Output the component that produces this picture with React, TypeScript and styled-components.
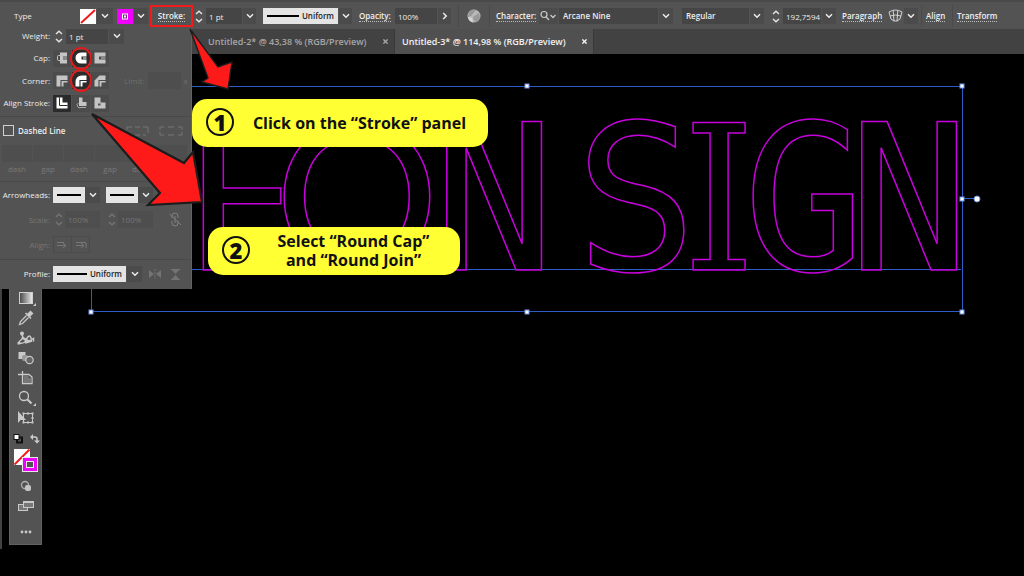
import React from "react";
import styled, { createGlobalStyle, css } from "styled-components";

const Global = createGlobalStyle`
  *, *::before, *::after { box-sizing: border-box; }
  html, body { margin: 0; background: #000; }
  body { font-family: "Open Sans", "Noto Sans", sans-serif; font-size: 8px; font-weight: 500; line-height: 12px; color: #ececec; overflow: hidden; }
  button, input, select { font: inherit; color: inherit; margin: 0; padding: 0; border: 0; background: none; border-radius: 0; appearance: none; outline: none; }
  svg { display: block; }
`;

const Shell = styled.div`
  position: relative;
  display: flex;
  flex-direction: column;
  min-height: 100vh;
  overflow: hidden;
`;

/* ---------- shared controls ---------- */
const Field = styled.input<{ $w: number }>`
  width: ${(p) => p.$w}px;
  height: 16px;
  padding-left: 3px !important;
  background: #454545 !important;
`;
const Choice = styled.select<{ $w: number }>`
  width: ${(p) => p.$w}px;
  height: 16px;
  padding-left: 4px !important;
  background: #454545 !important;
  font-weight: 600 !important;
`;
const DropButton = styled.button<{ $w?: number }>`
  display: grid;
  place-items: center;
  width: ${(p) => p.$w ?? 13}px;
  height: 16px;
  background: #4b4b4b;
`;
const StepperBox = styled.button<{ $dim?: boolean }>`
  display: grid;
  place-items: center;
  width: 12px;
  height: 16px;
  color: ${(p) => (p.$dim ? "#747474" : "#e6e6e6")};
`;
const Sample = styled.button<{ $w: number }>`
  display: flex;
  align-items: center;
  gap: 3px;
  width: ${(p) => p.$w}px;
  height: 16px;
  padding: 0 4px;
  background: #e4e4e4;
  color: #222;
  font-weight: 600;
`;
const Rule = styled.span`
  flex: 1;
  height: 2px;
  background: #000;
`;

const Chevron = () => (
  <svg width="8" height="6" viewBox="0 0 8 6" fill="none" stroke="currentColor" strokeWidth="1.5">
    <path d="M1 1.2 4 4.2 7 1.2" />
  </svg>
);
const ChevronRight = () => (
  <svg width="6" height="8" viewBox="0 0 6 8" fill="none" stroke="currentColor" strokeWidth="1.5">
    <path d="M1.2 1 4.2 4 1.2 7" />
  </svg>
);
const Stepper = ({ label, dim }: { label: string; dim?: boolean }) => (
  <StepperBox aria-label={label} $dim={dim}>
    <svg width="8" height="13" viewBox="0 0 8 13" fill="none" stroke="currentColor" strokeWidth="1.4">
      <path d="M1 4 4 1.2 7 4M1 9 4 11.8 7 9" />
    </svg>
  </StepperBox>
);

/* ---------- control bar ---------- */
const ControlBar = styled.header`
  position: relative;
  z-index: 3;
  display: flex;
  align-items: center;
  height: 29px;
  padding: 1px 0 0 14px;
  background: #535353;
  border-top: 2px solid #4a4a4a;
`;
const BarGroup = styled.div<{ $w: number }>`
  display: flex;
  flex: none;
  align-items: center;
  gap: 1px;
  width: ${(p) => p.$w}px;
`;
const BarLink = styled.a`
  color: #f0f0f0;
  font-weight: 600;
  line-height: 10px;
  text-decoration: none;
  border-bottom: 1px dotted #bbb;
`;
const StrokeHighlight = styled.div`
  display: grid;
  place-items: center;
  flex: none;
  width: 43px;
  height: 22px;
  border: 2px solid #f01c1c;
`;
const Divider = styled.i<{ $after?: number }>`
  flex: none;
  width: 1px;
  height: 22px;
  margin-right: ${(p) => p.$after ?? 0}px;
  background: #4a4a4a;
`;
const FillSwatch = () => (
  <svg width="16" height="15" viewBox="0 0 16 15">
    <rect width="16" height="15" fill="#fff" />
    <path d="M1 14 15 1" stroke="#f01c1c" strokeWidth="2" />
  </svg>
);
const StrokeSwatch = () => (
  <svg width="16" height="15" viewBox="0 0 16 15">
    <rect width="16" height="15" fill="#f000ff" />
    <rect x="5.5" y="5" width="5" height="5" fill="#8a1b92" stroke="#fff" />
    <rect x="7" y="6.5" width="2" height="2" fill="#fff" />
  </svg>
);

/* ---------- document tabs ---------- */
const Tabs = styled.nav`
  display: flex;
  height: 25px;
  padding-left: 192px;
  background: #424242;
`;
const Tab = styled.div<{ $active?: boolean }>`
  display: flex;
  align-items: center;
  justify-content: space-between;
  width: ${(p) => (p.$active ? 199 : 203)}px;
  padding: 0 4px 0 ${(p) => (p.$active ? 7 : 16)}px;
  border-right: 1px solid #393939;
  background: ${(p) => (p.$active ? "#505050" : "#424242")};
  color: ${(p) => (p.$active ? "#f2f2f2" : "#a6a6a6")};
  font-size: 9px;
  font-weight: 600;
`;
const CloseButton = styled.button`
  display: grid;
  place-items: center;
  width: 10px;
  height: 12px;
`;
const Close = ({ label }: { label: string }) => (
  <CloseButton aria-label={label}>
    <svg width="5" height="5" viewBox="0 0 5 5" stroke="currentColor" strokeWidth="1.4">
      <path d="M.4.4 4.6 4.6M4.6.4.4 4.6" />
    </svg>
  </CloseButton>
);

/* ---------- stroke panel ---------- */
const Panel = styled.section`
  position: absolute;
  z-index: 2;
  top: 24px;
  left: 0;
  width: 192px;
  background: #535353;
  border-right: 1px solid #626262;
`;
const Section = styled.div`
  padding: 1px 0 2px;
  & + & { border-top: 1px solid #494949; }
`;
const Row = styled.div<{ $h?: number; $dim?: boolean }>`
  display: flex;
  align-items: center;
  gap: 1px;
  height: ${(p) => p.$h ?? 22}px;
  ${(p) => p.$dim && css`color: #767676;`}
`;
const RowLabel = styled.label`
  flex: none;
  width: 50px;
  margin-right: 2px;
  text-align: right;
  white-space: nowrap;
`;
const Pair = styled.div`
  display: flex;
  align-items: center;
  width: 52px;
`;
const IconToggle = styled.button<{ $on?: boolean; $ring?: boolean }>`
  position: relative;
  display: grid;
  place-items: center;
  width: 18px;
  height: 17px;
  color: ${(p) => (p.$on ? "#fff" : "#c4c4c4")};
  background: ${(p) => (p.$on ? "#2b2b2b" : "#4c4c4c")};
  ${(p) =>
    p.$ring &&
    css`
      &::after {
        content: "";
        position: absolute;
        inset: -3px -2px;
        border: 2px solid #e01c1c;
        border-radius: 50%;
      }
    `}
`;
const LimitGroup = styled.div`
  display: flex;
  align-items: center;
  gap: 3px;
  margin-left: 14px;
  color: #6e6e6e;
`;
const DimField = styled.input<{ $w: number }>`
  width: ${(p) => p.$w}px;
  height: 17px;
  padding-left: 3px !important;
  color: #767676 !important;
  background: #4e4e4e !important;
`;
const CheckLabel = styled.label`
  display: flex;
  align-items: center;
  gap: 4px;
  width: 120px;
  padding-left: 3px;
  font-weight: 600;
`;
const Check = styled.input`
  width: 11px;
  height: 11px;
  border: 1px solid #cfcfcf !important;
`;
const DimButton = styled.button`
  display: grid;
  place-items: center;
  width: 30px;
  height: 17px;
  margin-left: 2px;
  color: #777;
`;
const DashGrid = styled.div`
  display: grid;
  grid-template-columns: repeat(6, 30px);
  column-gap: 1px;
  padding: 2px 0 4px 2px;
  color: #787878;
  text-align: center;
`;
const DashCell = styled.label`
  display: flex;
  flex-direction: column;
  gap: 1px;
`;

const CapIcon = ({ kind }: { kind: "butt" | "round" | "square" }) => (
  <svg width="12" height="12" viewBox="0 0 12 12" fill="currentColor">
    {kind === "butt" && (
      <>
        <path d="M4 .5h7v4H7v3h4v4H4z" />
        <path d="M4 3.5H2.5a1 1 0 0 0-1 1v3a1 1 0 0 0 1 1H4" fill="none" stroke="currentColor" />
        <path d="M5 5.5h6v1H5z" />
      </>
    )}
    {kind === "round" && <path d="M11.5 .5v4H6.5v3h5v4H6a5.5 5.5 0 0 1 0-11zM8 5.5h3.5v1H8z" />}
    {kind === "square" && <path d="M.5 .5h11v4H5v3h6.5v4H.5zM7 5.5h4.5v1H7z" />}
  </svg>
);
const CornerIcon = ({ kind, ground }: { kind: "miter" | "round" | "bevel"; ground: string }) => (
  <svg width="12" height="12" viewBox="0 0 12 12" fill="currentColor">
    {kind === "miter" && <path d="M.5 .5h11v7h-4v4h-7z" />}
    {kind === "round" && <path d="M.5 11.5V6.5a6 6 0 0 1 6-6h5v7h-4v4z" />}
    {kind === "bevel" && <path d="M.5 11.5V5.5l5-5h6v7h-4v4z" />}
    <path d="M5 12V5.5h7" fill="none" stroke={ground} strokeWidth="1.1" />
  </svg>
);
const AlignIcon = ({ kind }: { kind: "center" | "inside" | "outside" }) => (
  <svg width="12" height="12" viewBox="0 0 12 12">
    {kind === "center" && (
      <>
        <path d="M.5 .5h6v5h5v6H.5z" fill="currentColor" />
        <path d="M3.5 .5v8h8" fill="none" stroke="#2b2b2b" />
      </>
    )}
    {kind === "inside" && (
      <>
        <path d="M4 .5h3.5v4.5h4v4H4z" fill="currentColor" />
        <path d="M3.5 6A2.5 2.5 0 1 0 6 10.5h5" fill="none" stroke="currentColor" strokeWidth=".8" />
      </>
    )}
    {kind === "outside" && (
      <>
        <path d="M.5 .5h6v5h5v6H.5z" fill="currentColor" />
        <path d="M4 6.5h2.500v2H4z" fill="#535353" />
      </>
    )}
  </svg>
);

/* ---------- workspace ---------- */
const Workspace = styled.main`
  position: relative;
  display: flex;
  flex: 1;
  align-items: flex-start;
  background: #000;
`;
const WindowEdge = styled.i`
  width: 2px;
  height: 495px;
  background: #424242;
`;
const Toolbox = styled.aside`
  display: flex;
  flex-direction: column;
  align-items: center;
  width: 33px;
  margin-left: 7px;
  padding-top: 233px;
  background: #535353;
  border: 1px solid #626262;
`;
const Tool = styled.button<{ $h?: number }>`
  display: grid;
  place-items: center;
  width: 24px;
  height: ${(p) => p.$h ?? 20}px;
  color: #c9c9c9;
`;
const ColorWell = styled.div`
  display: flex;
  flex-direction: column;
  gap: 4px;
  padding: 6px 0 2px;
`;
const Artboard = styled.svg`
  position: absolute;
  top: -54px;
  left: 0;
`;
const Annotations = styled.svg`
  position: absolute;
  z-index: 4;
  top: 0;
  left: 0;
  pointer-events: none;
`;
const Callout = styled.div<{ $x: number; $y: number; $w: number }>`
  position: absolute;
  z-index: 5;
  left: ${(p) => p.$x}px;
  top: ${(p) => p.$y}px;
  display: grid;
  grid-template-columns: 28px 1fr;
  align-items: center;
  width: ${(p) => p.$w}px;
  height: 48px;
  padding: 0 3px 0 14px;
  border-radius: 15px;
  background: #ffff33;
  color: #111;
  font: 700 16px/19px "Open Sans", "Noto Sans", sans-serif;
  text-align: center;
`;
const StepNumber = styled.b`
  display: grid;
  place-items: center;
  width: 28px;
  height: 28px;
  margin-top: -3px;
  border: 2px solid #111;
  border-radius: 50%;
  font-size: 22px;
  line-height: 24px;
`;

const MONO = '"DejaVu Sans Mono", monospace';
const LETTERS = [
  [
    { ch: "E", x: 244, size: 206, font: "Lato, sans-serif" },
    { ch: "O", x: 357, size: 206, font: "Lato, sans-serif" },
    { ch: "N", x: 494, size: 203, font: MONO },
  ],
  [
    { ch: "S", x: 636, size: 203, font: MONO },
    { ch: "I", x: 719, size: 203, font: `"DejaVu Serif Condensed", ${MONO}` },
    { ch: "G", x: 804, size: 203, font: MONO },
    { ch: "N", x: 909, size: 203, font: MONO },
  ],
];
const HANDLES = [
  [91, 86], [527, 86], [962, 86], [962, 199], [91, 312], [527, 312], [962, 312],
];

export default function App() {
  return (
    <Shell>
      <Global />
      <ControlBar>
        <BarGroup $w={66}>Type</BarGroup>
        <BarGroup $w={37}>
          <FillSwatch />
          <DropButton aria-label="Fill colour" $w={16}><Chevron /></DropButton>
        </BarGroup>
        <BarGroup $w={33}>
          <StrokeSwatch />
          <DropButton aria-label="Stroke colour" $w={14}><Chevron /></DropButton>
        </BarGroup>
        <StrokeHighlight><BarLink href="#stroke">Stroke:</BarLink></StrokeHighlight>
        <BarGroup $w={70}>
          <Stepper label="Stroke weight step" />
          <Field $w={36} aria-label="Stroke weight" defaultValue="1 pt" />
          <DropButton aria-label="Stroke weight presets"><Chevron /></DropButton>
        </BarGroup>
        <BarGroup $w={96}>
          <Sample $w={75}><Rule />Uniform</Sample>
          <DropButton aria-label="Profiles"><Chevron /></DropButton>
        </BarGroup>
        <BarGroup $w={36}><BarLink href="#opacity">Opacity:</BarLink></BarGroup>
        <BarGroup $w={63}>
          <Field $w={42} aria-label="Opacity" defaultValue="100%" />
          <DropButton aria-label="Opacity slider"><ChevronRight /></DropButton>
        </BarGroup>
        <Divider />
        <BarGroup $w={30}>
          <svg width="30" height="14" viewBox="0 0 30 14">
            <circle cx="15" cy="7" r="6.5" fill="#b9b9b9" />
            <path d="M10 2.5a7 7 0 0 1 7-1.5l-5 6-3 1zM14 8l6-4 1 5-3 4-3-1z" fill="#999" />
            <path d="M9 8l4 1 1 4.5A6.5 6.5 0 0 1 9 8z" fill="#d4d4d4" />
          </svg>
        </BarGroup>
        <Divider $after={6} />
        <BarGroup $w={43}><BarLink href="#character">Character:</BarLink></BarGroup>
        <BarGroup $w={143}>
          <svg width="19" height="16" viewBox="2 0 19 16" fill="none" stroke="#c9c9c9">
            <rect width="23" height="16" fill="#4b4b4b" stroke="none" />
            <circle cx="7" cy="6.5" r="3" strokeWidth="1.2" />
            <path d="M9.2 9 12 12M13.5 7l2.5 2.5L18.5 7" strokeWidth="1.3" />
          </svg>
          <Choice $w={99} aria-label="Font family"><option>Arcane Nine</option></Choice>
          <DropButton aria-label="Font list" $w={14}><Chevron /></DropButton>
        </BarGroup>
        <BarGroup $w={88}>
          <Choice $w={67} aria-label="Font style"><option>Regular</option></Choice>
          <DropButton aria-label="Style list" $w={14}><Chevron /></DropButton>
        </BarGroup>
        <BarGroup $w={72}>
          <Stepper label="Font size step" />
          <Field $w={38} aria-label="Font size" defaultValue="192,7594" />
          <DropButton aria-label="Font size presets" $w={14}><Chevron /></DropButton>
        </BarGroup>
        <BarGroup $w={46}><BarLink href="#paragraph">Paragraph</BarLink></BarGroup>
        <BarGroup $w={33}>
          <svg width="15" height="14" viewBox="0 0 15 14" fill="none" stroke="#d2d2d2">
            <path d="M1 3q6.5-4 13 0l-2 7q-4.5 4-9 0zM2 7q5.5-2 11 0M5.2 1.5 6 12.5M9.8 1.5 9 12.5" />
          </svg>
          <DropButton aria-label="Envelope options" $w={14}><Chevron /></DropButton>
        </BarGroup>
        <Divider $after={4} />
        <BarGroup $w={26}><BarLink href="#align">Align</BarLink></BarGroup>
        <Divider $after={4} />
        <BarGroup $w={44}><BarLink href="#transform">Transform</BarLink></BarGroup>
      </ControlBar>

      <Tabs>
        <Tab>Untitled-2* @ 43,38 % (RGB/Preview)<Close label="Close Untitled-2" /></Tab>
        <Tab $active>Untitled-3* @ 114,98 % (RGB/Preview)<Close label="Close Untitled-3" /></Tab>
      </Tabs>

      <Panel>
        <Section>
          <Row>
            <RowLabel htmlFor="weight">Weight:</RowLabel>
            <Stepper label="Weight step" />
            <Field $w={42} id="weight" defaultValue="1 pt" />
            <DropButton aria-label="Weight presets" $w={15}><Chevron /></DropButton>
          </Row>
          <Row>
            <RowLabel as="span">Cap:</RowLabel>
            <IconToggle aria-label="Butt cap"><CapIcon kind="butt" /></IconToggle>
            <IconToggle aria-label="Round cap" $on $ring><CapIcon kind="round" /></IconToggle>
            <IconToggle aria-label="Projecting cap"><CapIcon kind="square" /></IconToggle>
          </Row>
          <Row $h={23}>
            <RowLabel as="span">Corner:</RowLabel>
            <IconToggle aria-label="Miter join"><CornerIcon kind="miter" ground="#4c4c4c" /></IconToggle>
            <IconToggle aria-label="Round join" $on $ring><CornerIcon kind="round" ground="#2b2b2b" /></IconToggle>
            <IconToggle aria-label="Bevel join"><CornerIcon kind="bevel" ground="#4c4c4c" /></IconToggle>
            <LimitGroup>
              <label htmlFor="limit">Limit:</label>
              <DimField $w={33} id="limit" disabled />x
            </LimitGroup>
          </Row>
          <Row>
            <RowLabel as="span">Align Stroke:</RowLabel>
            <IconToggle aria-label="Align to centre" $on><AlignIcon kind="center" /></IconToggle>
            <IconToggle aria-label="Align to inside"><AlignIcon kind="inside" /></IconToggle>
            <IconToggle aria-label="Align to outside"><AlignIcon kind="outside" /></IconToggle>
          </Row>
        </Section>
        <Section>
          <Row $h={25}>
            <CheckLabel><Check type="checkbox" />Dashed Line</CheckLabel>
            <DimButton aria-label="Preserve dash length">
              <svg width="24" height="10" viewBox="0 0 24 10" fill="none" stroke="currentColor">
                <path d="M1 4V1h5M9 1h5M17 1h5v6M1 6v3h5M9 9h5M17 9h3" />
              </svg>
            </DimButton>
            <DimButton aria-label="Align dashes to corners">
              <svg width="24" height="10" viewBox="0 0 24 10" fill="none" stroke="currentColor">
                <path d="M1 4V1h4M9 1h6M19 1h4v3M1 6v3h4M9 9h6M19 9h4V6" />
              </svg>
            </DimButton>
          </Row>
          <DashGrid>
            {["dash", "gap", "dash", "gap", "dash", "gap"].map((t, i) => (
              <DashCell key={i}><DimField $w={30} disabled />{t}</DashCell>
            ))}
          </DashGrid>
        </Section>
        <Section>
          <Row $h={24}>
            <RowLabel as="span">Arrowheads:</RowLabel>
            <Pair>
              <Sample $w={32} aria-label="Start arrowhead"><Rule /></Sample>
              <DropButton aria-label="Start arrowheads" $w={15}><Chevron /></DropButton>
            </Pair>
            <Pair>
              <Sample $w={32} aria-label="End arrowhead"><Rule /></Sample>
              <DropButton aria-label="End arrowheads" $w={15}><Chevron /></DropButton>
            </Pair>
          </Row>
          <Row $h={25} $dim>
            <RowLabel htmlFor="scale">Scale:</RowLabel>
            <Pair>
              <Stepper label="Start scale step" dim />
              <DimField $w={35} id="scale" disabled defaultValue="100%" />
            </Pair>
            <Pair>
              <Stepper label="End scale step" dim />
              <DimField $w={35} aria-label="End scale" disabled defaultValue="100%" />
            </Pair>
            <svg width="32" height="15" viewBox="0 0 32 15" fill="none" stroke="#808080">
              <path d="M13 6V4a3 3 0 0 1 6 0v2M13 9v2a3 3 0 0 0 6 0V9M16 4v7M10.5 2 22 13" />
            </svg>
          </Row>
          <Row $h={25} $dim>
            <RowLabel as="span">Align:</RowLabel>
            <svg width="37" height="17" viewBox="0 0 37 17" fill="none" stroke="#787878">
              <path d="M.5 .5h36v16H.5zM18.5 0v17" stroke="#4b4b4b" />
              <path d="M4 6.5h7M4 9.5h8M10 7l3 2.5L10 12M23 6.5h10M23 9.5h7M28 7l3 2.5-3 2.5M33 7v5" />
            </svg>
          </Row>
        </Section>
        <Section>
          <Row $h={26}>
            <RowLabel as="span">Profile:</RowLabel>
            <Sample $w={73}><Rule />Uniform</Sample>
            <DropButton aria-label="Profile list" $w={15}><Chevron /></DropButton>
            <svg width="44" height="14" viewBox="2 0 44 14" fill="#747474">
              <path d="M8 3l5 4-5 4zM20 3l-5 4 5 4zM30 2h9v1H30zM30 12h9v1H30zM31 3h7l-3.5 4zM31 12h7l-3.5-4z" />
              <path d="M14 2v10" stroke="#747474" strokeDasharray="2 1" />
            </svg>
          </Row>
        </Section>
      </Panel>

      <Workspace>
        <WindowEdge />
        <Toolbox>
          <Tool aria-label="Gradient">
            <svg width="22" height="18" viewBox="0 0 22 18">
              <defs><linearGradient id="g"><stop offset="0" stopColor="#444" /><stop offset="1" stopColor="#eee" /></linearGradient></defs>
              <rect x="4.5" y="3.5" width="13" height="11" fill="url(#g)" stroke="#d0d0d0" />
              <path d="M21 14v3h-3z" fill="#ccc" />
            </svg>
          </Tool>
          <Tool aria-label="Eyedropper">
            <svg width="16" height="16" viewBox="0 0 16 16" fill="none" stroke="currentColor">
              <path d="M8.5 5.5 2.5 11.5 1.5 14.5 4.5 13.5 10.5 7.5" strokeWidth="1.3" />
              <path d="M7 3.5l5.5 5.5 1-1-1.2-1.5L15.5 3.5 12.5 .5 9.5 3.5 8 2.5z" fill="currentColor" stroke="none" />
            </svg>
          </Tool>
          <Tool aria-label="Puppet warp">
            <svg width="18" height="16" viewBox="0 0 18 16" fill="none" stroke="currentColor">
              <circle cx="5" cy="3.5" r="2" fill="currentColor" stroke="none" />
              <path d="M4.5 4q2.5 3.5 0 5.5-3 2-2.5 3.5 3 1 6-1l2-4q3-4 4 0 .5 2 2.5.5v3" strokeWidth="1.5" />
              <path d="M5 7.5l6 3.500M8 12.500l7-2" strokeWidth="2.6" />
              <path d="M.5 12h2.5v2.5H.5z" fill="currentColor" stroke="none" />
            </svg>
          </Tool>
          <Tool aria-label="Blend">
            <svg width="18" height="16" viewBox="0 0 18 16">
              <rect x="1.5" y="2" width="7" height="7" fill="currentColor" />
              <rect x="5" y="5" width="6" height="6" rx="2" fill="#999" />
              <circle cx="12.5" cy="10" r="3.7" fill="#666" stroke="currentColor" strokeWidth="1.2" />
            </svg>
          </Tool>
          <Tool aria-label="Artboard">
            <svg width="16" height="16" viewBox="0 0 16 16" fill="none" stroke="currentColor">
              <path d="M4.5 1v12.5h9.5V7l-3-2.5H0" strokeWidth="1.3" />
              <path d="M5.5 5.5h5v2.5h3v5h-8z" fill="#777" stroke="none" />
            </svg>
          </Tool>
          <Tool aria-label="Zoom">
            <svg width="20" height="18" viewBox="0 0 20 18" fill="none" stroke="currentColor">
              <circle cx="8" cy="7" r="4.5" strokeWidth="1.3" />
              <path d="M11.5 10.5 15.5 14.5" strokeWidth="2.2" />
              <path d="M20 14v3h-3z" fill="#ccc" stroke="none" />
            </svg>
          </Tool>
          <Tool aria-label="Free transform">
            <svg width="18" height="16" viewBox="0 0 18 16">
              <path d="M6.5 3.5h9v9h-9z" fill="none" stroke="currentColor" />
              <path d="M1 1v12l2.5-3H9z" fill="currentColor" />
              <path d="M5.5 2.5h2v2h-2zM10 2.5h2v2h-2zM14.5 2.5h2v2h-2zM14.5 7h2v2h-2zM5.5 11.5h2v2h-2zM10 11.5h2v2h-2zM14.5 11.5h2v2h-2z" fill="currentColor" />
            </svg>
          </Tool>
          <ColorWell>
            <svg width="28" height="10" viewBox="0 0 28 10">
              <rect x="5" y="3.5" width="5" height="5" fill="none" stroke="#111" strokeWidth="2" />
              <rect x="2" y=".5" width="5" height="5" fill="#fff" stroke="#111" />
              <path d="M20 3h3q2 0 2 2v3" fill="none" stroke="#ccc" strokeWidth="1.5" />
              <path d="M21 0v6l-3-3zM22 6.5h6l-3 3z" fill="#ccc" />
            </svg>
            <svg width="28" height="26" viewBox="0 0 28 26">
              <rect x="2" y="1" width="16" height="16" fill="#fff" />
              <path d="M2.5 16.5 17.5 1.5" stroke="#f01c1c" strokeWidth="2" />
              <rect x="10.5" y="9.5" width="15" height="14" fill="#535353" stroke="#e6e6e6" />
              <rect x="12.5" y="11.5" width="11" height="10" fill="none" stroke="#f000ff" strokeWidth="3" />
              <rect x="14.5" y="13.5" width="7" height="6" fill="none" stroke="#e6e6e6" />
            </svg>
          </ColorWell>
          <Tool aria-label="Drawing mode">
            <svg width="12" height="12" viewBox="0 0 12 12">
              <circle cx="5" cy="5" r="3.5" fill="none" stroke="#b0b0b0" strokeWidth="1.3" />
              <rect x="5" y="5" width="6" height="6" rx="2" fill="#c4c4c4" />
            </svg>
          </Tool>
          <Tool aria-label="Screen mode">
            <svg width="16" height="12" viewBox="0 0 16 12">
              <rect x=".5" y="4.5" width="9" height="6" fill="#777" stroke="currentColor" />
              <rect x="5.5" y="1.5" width="10" height="6" fill="#777" stroke="currentColor" />
              <path d="M5 2h11" stroke="currentColor" strokeWidth="2" />
            </svg>
          </Tool>
          <Tool aria-label="Edit toolbar" $h={28}>
            <svg width="12" height="8" viewBox="0 0 12 8" fill="currentColor">
              <circle cx="2" cy="6" r="1.4" /><circle cx="6" cy="6" r="1.4" /><circle cx="10" cy="6" r="1.4" />
            </svg>
          </Tool>
        </Toolbox>

        <Artboard width="1024" height="576" viewBox="0 0 1024 576">
          <g fill="none" stroke="#2f5cc4" shapeRendering="crispEdges">
            <path d="M91.5 86.5h871v225h-871zM91 269.5h870M963 198.5h14" />
          </g>
          <g fill="none" stroke="#c800de" strokeWidth="1.5">
            {LETTERS.map((word, w) => (
              <text key={w} y="270" textAnchor="middle" fontWeight="400">
                {word.map((l, i) => (
                  <tspan key={i} x={l.x} fontSize={l.size} fontFamily={l.font}>{l.ch}</tspan>
                ))}
              </text>
            ))}
          </g>
          <g fill="#fff" stroke="#6f92ea">
            {HANDLES.map(([x, y]) => (
              <rect key={`${x}-${y}`} x={x - 2} y={y - 2} width="4" height="4" />
            ))}
            <circle cx="977" cy="199" r="3" />
          </g>
        </Artboard>
      </Workspace>

      <Annotations width="300" height="300" viewBox="0 0 300 300">
        <g fill="#ff1a1a" stroke="#1c1c1c" strokeWidth="2.2">
          <path d="M190 29 218 67 232 62 228 89 202 82 208 78Z" strokeWidth="1.4" />
          <path d="M92 114 184 163 193 152 202 202 148 205 160 193Z" />
        </g>
      </Annotations>
      <Callout $x={192} $y={99} $w={296}><StepNumber>1</StepNumber><span>Click on the “Stroke” panel</span></Callout>
      <Callout $x={208} $y={227} $w={252}>
        <StepNumber>2</StepNumber><span>Select “Round Cap”<br />and “Round Join”</span>
      </Callout>
    </Shell>
  );
}
